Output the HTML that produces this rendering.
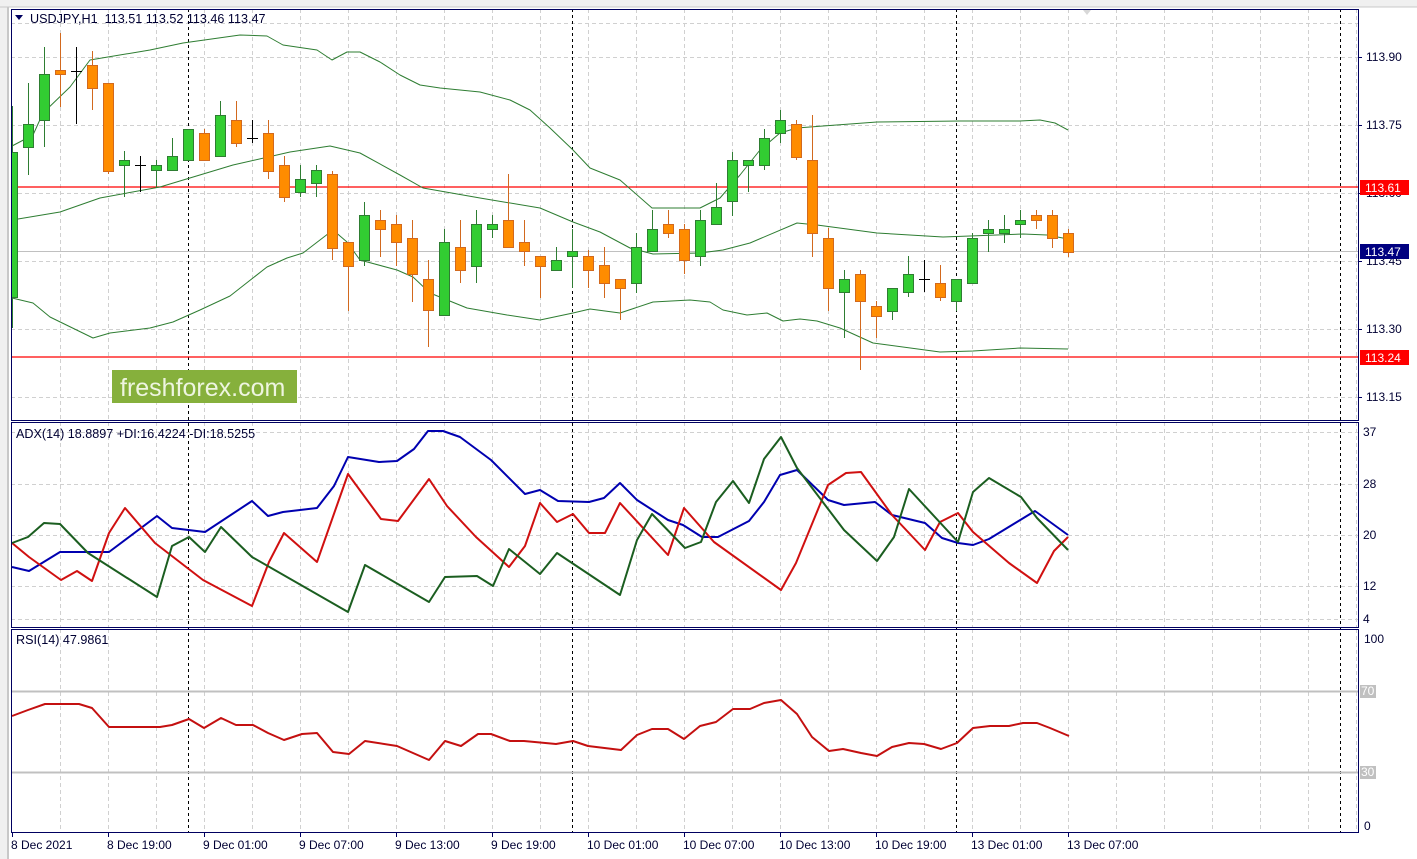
<!DOCTYPE html>
<html><head><meta charset="utf-8"><style>
html,body{margin:0;padding:0;background:#fff;width:1417px;height:859px;overflow:hidden}
svg{display:block}
text{font-family:"Liberation Sans",sans-serif;font-size:12px;fill:#000033;white-space:pre}
</style></head><body>
<svg id="s" width="1417" height="859" xmlns="http://www.w3.org/2000/svg"></svg>
<script>
var o=[];
function A(x){o.push(x);}
A('<defs><clipPath id="cp"><rect x="12" y="10" width="1346" height="410"/></clipPath></defs>');
A('<rect x="0" y="0" width="1417" height="859" fill="#fff"/>');
A('<rect x="0" y="0" width="9" height="859" fill="#f0f0f0"/><line x1="8" y1="0" x2="8" y2="859" stroke="#a0a0a0"/>');
A('<rect x="0" y="0" width="1417" height="7" fill="#f0f0f0"/><line x1="0" y1="7" x2="1417" y2="7" stroke="#c8c8c8"/>');
var panes=[[9,420],[422,627],[629,832]];
for(var x=60;x<1358;x+=48){ if(x===188||x===572||x===956||x===1340)continue;
 panes.forEach(function(p){A('<line x1="'+x+'.5" y1="'+p[0]+'" x2="'+x+'.5" y2="'+p[1]+'" stroke="#d0d0d0" stroke-dasharray="4,3"/>');});}
[23,57,125,193,261,329,397].forEach(function(y){A('<line x1="11" y1="'+y+'.5" x2="1358" y2="'+y+'.5" stroke="#d0d0d0" stroke-dasharray="4,3"/>');});
[432,484,535,586,619].forEach(function(y){A('<line x1="11" y1="'+y+'.5" x2="1358" y2="'+y+'.5" stroke="#d0d0d0" stroke-dasharray="4,3"/>');});
[188,572,956,1340].forEach(function(x){A('<line x1="'+x+'.5" y1="9" x2="'+x+'.5" y2="832" stroke="#000" stroke-dasharray="3,3"/>');});
A('<line x1="11" y1="251.5" x2="1358" y2="251.5" stroke="#c0c0c0"/>');
A('<line x1="11" y1="187" x2="1358" y2="187" stroke="#ff0000" stroke-width="1.3"/>');
A('<line x1="11" y1="357" x2="1358" y2="357" stroke="#ff0000" stroke-width="1.3"/>');
A('<line x1="11" y1="691.5" x2="1358" y2="691.5" stroke="#c0c0c0" stroke-width="2"/>');
A('<line x1="11" y1="772.5" x2="1358" y2="772.5" stroke="#c0c0c0" stroke-width="2"/>');
function pl(pts,c,w){A('<polyline fill="none" stroke="'+c+'" stroke-width="'+w+'" stroke-linejoin="round" points="'+pts+'"/>');}
A('<g clip-path="url(#cp)">');
pl("12,146 33,135 43,113 70,87 90,60 150,50 183,43 240,35 267,36 283,45 317,50 332,60 347,52 360,52 380,62 400,75 420,85 440,88 480,92 510,100 530,110 550,128 573,150 590,168 620,180 652,208 700,208 720,198 740,175 760,150 780,133 797,128 823,126 877,122 960,121 1020,121 1040,120 1055,123 1068,130","#2e7d32",1);
pl("12,220 60,212 100,198 160,187 233,165 290,152 330,146 360,153 400,175 423,188 480,198 540,208 573,222 600,232 630,248 653,254 700,253 723,250 750,243 797,223 817,225 877,233 943,237 1023,234 1047,235 1068,239","#2e7d32",1);
pl("12,298 33,303 50,317 93,338 110,333 150,328 173,322 200,310 230,296 267,267 287,258 303,253 333,230 347,242 360,260 397,270 413,277 430,293 467,308 507,315 540,320 573,313 590,309 620,313 653,302 690,300 710,302 723,310 747,315 767,313 783,321 800,319 817,321 840,328 873,343 940,352 973,351 1020,348 1068,349","#2e7d32",1);
var c=[[297,152,106,328],[147,124,83,175],[120,74,47,147],[70,74,33,107],[71,71,47,124],[65,88,51,110],[83,171,83,174],[165,160,151,197],[165,165,156,192],[170,165,160,188],[170,156,138,170],[160,129,129,160],[133,160,129,160],[156,115,101,156],[120,143,101,147],[138,138,120,143],[133,171,120,179],[165,197,156,202],[192,179,165,197],[183,170,165,197],[174,248,171,260],[242,266,242,311],[260,215,202,266],[220,229,210,257],[224,242,215,266],[238,274,220,302],[279,310,260,347],[315,242,229,315],[247,270,220,283],[266,224,210,283],[229,224,215,238],[220,247,174,247],[242,251,220,266],[256,266,256,298],[270,260,247,270],[256,251,229,288],[256,270,250,288],[265,283,247,298],[279,288,279,320],[283,247,233,293],[251,229,210,251],[224,233,210,238],[229,260,224,274],[256,220,210,266],[224,207,183,224],[201,160,152,216],[165,160,160,192],[165,138,129,170],[133,120,110,143],[124,157,120,160],[160,233,115,257],[238,288,228,311],[292,279,270,338],[274,301,270,370],[306,316,301,338],[311,288,288,320],[292,274,256,297],[279,279,260,292],[283,297,265,301],[301,279,279,311],[283,238,233,283],[233,229,220,252],[233,229,215,243],[224,220,210,238],[215,220,210,229],[215,238,210,248],[233,252,229,257]];
c.forEach(function(d,i){var x=12+16*i,o1=d[0],cl=d[1],h=d[2],l=d[3];
 var col,fill;
 if(o1===cl){A('<line x1="'+(x+.5)+'" y1="'+h+'" x2="'+(x+.5)+'" y2="'+l+'" stroke="#000"/><line x1="'+(x-5)+'" y1="'+(o1+.5)+'" x2="'+(x+6)+'" y2="'+(o1+.5)+'" stroke="#000"/>');return;}
 if(cl<o1){col="#2e7d32";fill="#32cd32";}else{col="#d2691e";fill="#ff8c00";}
 var t=Math.min(o1,cl),b=Math.max(o1,cl);
 A('<line x1="'+(x+.5)+'" y1="'+h+'" x2="'+(x+.5)+'" y2="'+l+'" stroke="'+col+'"/>');
 A('<rect x="'+(x-4.5)+'" y="'+(t+.5)+'" width="10" height="'+Math.max(b-t,1)+'" fill="'+fill+'" stroke="'+col+'"/>');
});
A('</g>');
pl("12,567 29,571 60,552 109,552 157,516 172,528 205,532 252,501 268,516 283,512 317,508 334,486 348,457 379,462 397,461 414,449 428,431 443,431 460,437 491,460 525,494 540,490 558,501 589,502 604,498 620,483 637,500 668,520 683,525 702,537 718,537 749,521 764,502 780,475 797,470 828,500 844,505 875,502 892,515 925,523 942,538 958,543 973,545 989,539 1035,511 1068,535","#0000b0",2);
pl("12,543 29,557 61,580 77,571 92,581 109,533 125,508 155,543 203,580 252,606 269,562 284,533 317,562 348,474 381,519 398,521 429,479 447,506 476,537 509,567 525,546 540,503 557,522 573,514 589,533 605,533 620,503 668,555 684,508 714,542 781,590 796,563 828,485 846,473 861,472 892,515 925,550 940,522 958,513 973,532 1009,563 1037,583 1054,551 1068,537","#d01010",2);
pl("12,543 28,537 44,523 60,524 88,553 157,597 172,546 189,537 205,552 221,527 252,557 348,612 365,565 429,602 445,577 477,576 493,586 509,549 540,574 557,553 620,595 637,540 652,514 685,548 701,542 716,502 733,481 749,503 764,459 781,437 797,468 844,530 877,561 894,537 909,489 958,542 973,492 989,478 1021,497 1037,518 1068,550","#1b5e20",2);
pl("12,716 28,710 45,704 79,704 92,708 109,727 160,727 172,725 189,719 204,728 221,718 236,725 253,725 268,733 284,740 302,734 317,733 333,752 349,754 365,741 397,746 429,760 445,741 461,746 478,734 491,734 510,741 524,741 556,744 573,741 588,746 621,750 637,735 652,729 668,729 684,739 700,726 716,722 733,709 750,709 764,703 781,700 797,714 812,737 829,751 843,749 861,753 877,756 892,747 909,743 924,744 941,749 957,743 973,728 990,726 1009,726 1023,723 1037,723 1050,728 1069,736","#c41010",2);
panes.forEach(function(p){A('<rect x="11.5" y="'+(p[0]+.5)+'" width="1347" height="'+(p[1]-p[0])+'" fill="none" stroke="#000060"/>');});
function lab(y,t){A('<line x1="1358" y1="'+(y+.5)+'" x2="1362" y2="'+(y+.5)+'" stroke="#000060"/><text x="1366" y="'+(y+4)+'">'+t+'</text>');}
[[57,"113.90"],[125,"113.75"],[193,"113.60"],[261,"113.45"],[329,"113.30"],[397,"113.15"]].forEach(function(a){lab(a[0],a[1]);});
A('<text x="1363" y="436">37</text><text x="1363" y="488">28</text><text x="1363" y="539">20</text><text x="1363" y="590">12</text><text x="1363" y="623">4</text>');
A('<text x="1364" y="643">100</text><text x="1364" y="830">0</text>');
A('<rect x="1360" y="685" width="16" height="13" fill="#c0c0c0"/><text x="1361" y="695" style="fill:#fff">70</text>');
A('<rect x="1360" y="766" width="16" height="13" fill="#c0c0c0"/><text x="1361" y="776" style="fill:#fff">30</text>');
A('<rect x="1360" y="180" width="49" height="15" fill="#ff0000"/><text x="1365" y="192" style="fill:#fff">113.61</text>');
A('<rect x="1360" y="350" width="49" height="15" fill="#ff0000"/><text x="1365" y="362" style="fill:#fff">113.24</text>');
A('<rect x="1360" y="244" width="49" height="15" fill="#000080"/><text x="1365" y="256" style="fill:#fff">113.47</text>');
var tl=[[12,"8 Dec 2021"],[108,"8 Dec 19:00"],[204,"9 Dec 01:00"],[300,"9 Dec 07:00"],[396,"9 Dec 13:00"],[492,"9 Dec 19:00"],[588,"10 Dec 01:00"],[684,"10 Dec 07:00"],[780,"10 Dec 13:00"],[876,"10 Dec 19:00"],[972,"13 Dec 01:00"],[1068,"13 Dec 07:00"]];
tl.forEach(function(a){A('<line x1="'+(a[0]+.5)+'" y1="832" x2="'+(a[0]+.5)+'" y2="837" stroke="#000060"/><text x="'+(a[0]-1)+'" y="849">'+a[1]+'</text>');});
A('<polygon points="15,15 23,15 19,20" fill="#000060"/><text x="30" y="23" style="font-size:12.6px">USDJPY,H1  113.51 113.52 113.46 113.47</text>');
A('<text x="16" y="438" style="font-size:12.6px">ADX(14) 18.8897 +DI:16.4224 -DI:18.5255</text>');
A('<text x="16" y="644" style="font-size:12.6px">RSI(14) 47.9861</text>');
A('<polygon points="1083,10 1091,10 1087,15" fill="#d8d8d8"/>');
A('<rect x="112" y="370" width="185" height="33" fill="#86b03c"/><text x="120" y="396" style="font-size:25px;fill:#eef5e0">freshforex.com</text>');
document.getElementById('s').innerHTML=o.join('');
</script>
</body></html>
